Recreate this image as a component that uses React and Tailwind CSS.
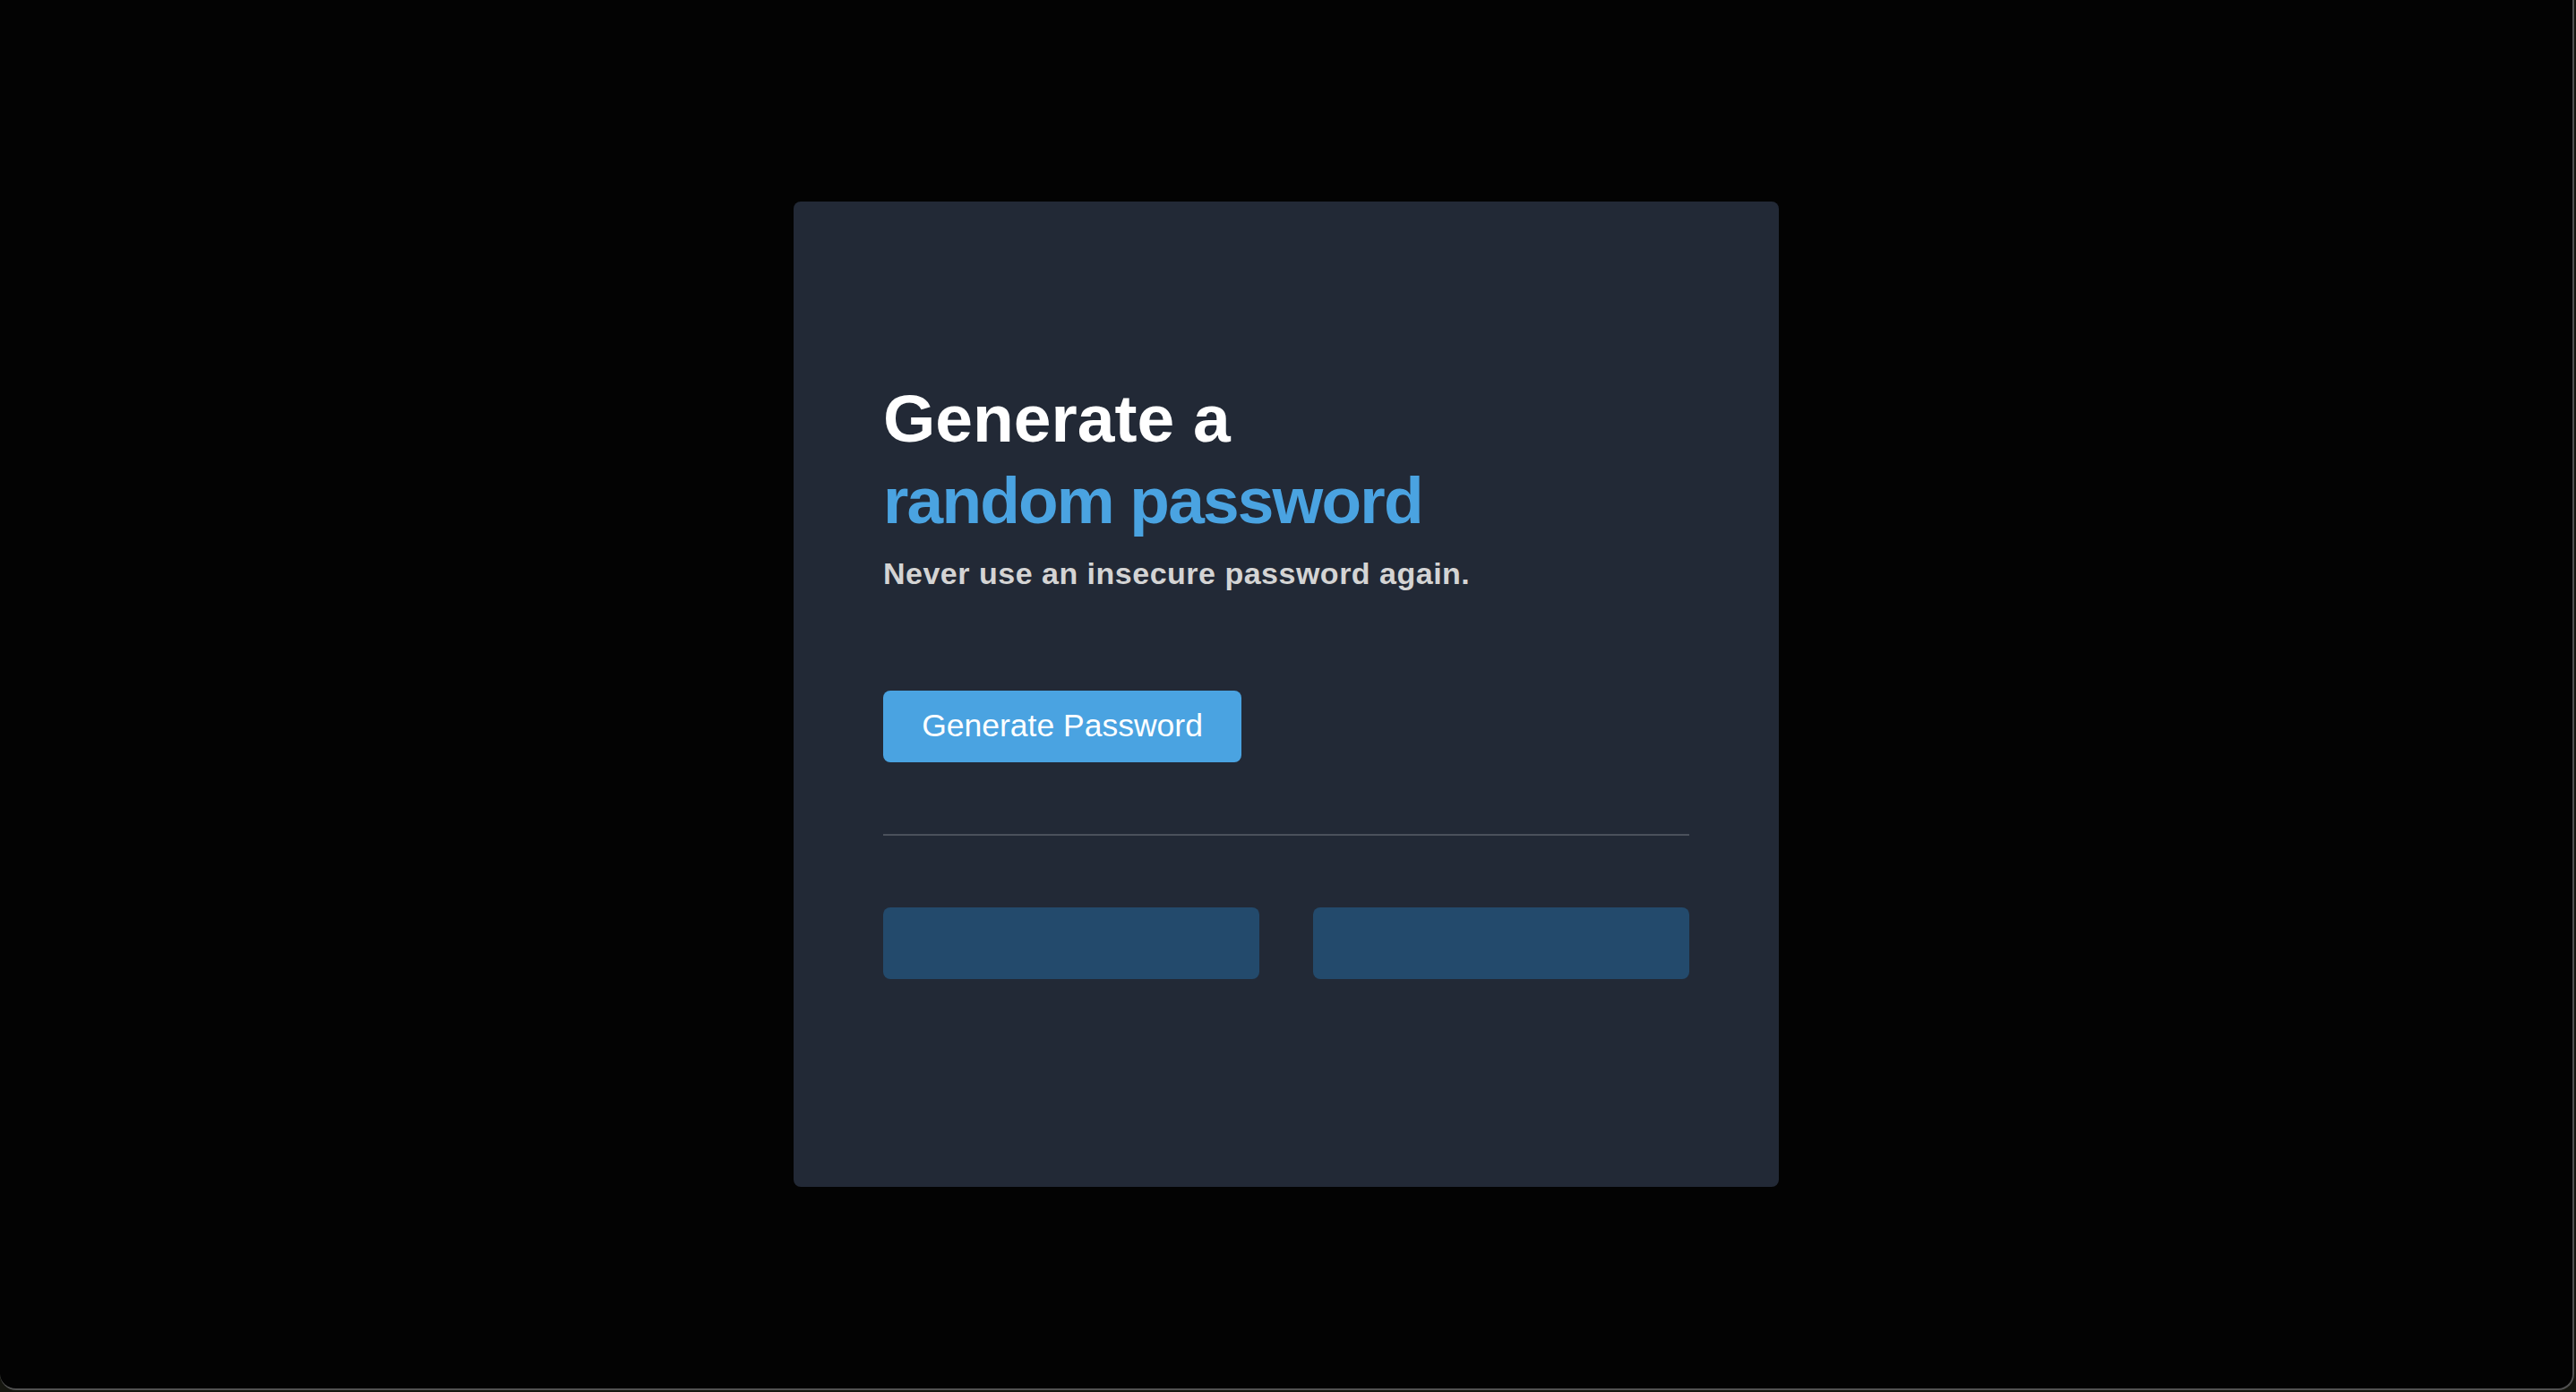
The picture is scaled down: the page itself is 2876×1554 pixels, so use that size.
export default function App() {
  return (
    <div className="w-[2876px] h-[1554px] bg-[#15160f] overflow-hidden" style={{ fontFamily: '"Liberation Sans", Arial, sans-serif' }}>
      <div className="w-[2874px] h-[1552px] bg-[#030303] border-r-2 border-b-2 border-[#505050] rounded-br-[18px] rounded-bl-[18px] flex items-center justify-center">
        <div className="w-[1100px] h-[1100px] rounded-lg bg-[#222936] px-[100px] pt-[197px] flex flex-col">
          <h1 className="text-[75px] leading-[90px] font-bold text-white">
            Generate a
            <span className="block leading-[94px] text-[73px] tracking-[-1.8px] text-[#4aa3e1]">random password</span>
          </h1>
          <p className="mt-[14px] text-[34px] leading-[40px] font-bold text-[#d4d4d4] tracking-[0.5px]">
            Never use an insecure password again.
          </p>
          <button className="mt-[111px] w-[400px] h-[80px] rounded-lg bg-[#4aa3e1] text-white text-[35.5px]">
            Generate Password
          </button>
          <div className="mt-[80px] h-[2px] bg-[#4b515c]"></div>
          <div className="mt-[80px] flex justify-between">
            <div className="w-[420px] h-[80px] rounded-lg bg-[#234a6c]"></div>
            <div className="w-[420px] h-[80px] rounded-lg bg-[#234a6c]"></div>
          </div>
        </div>
      </div>
    </div>
  );
}
